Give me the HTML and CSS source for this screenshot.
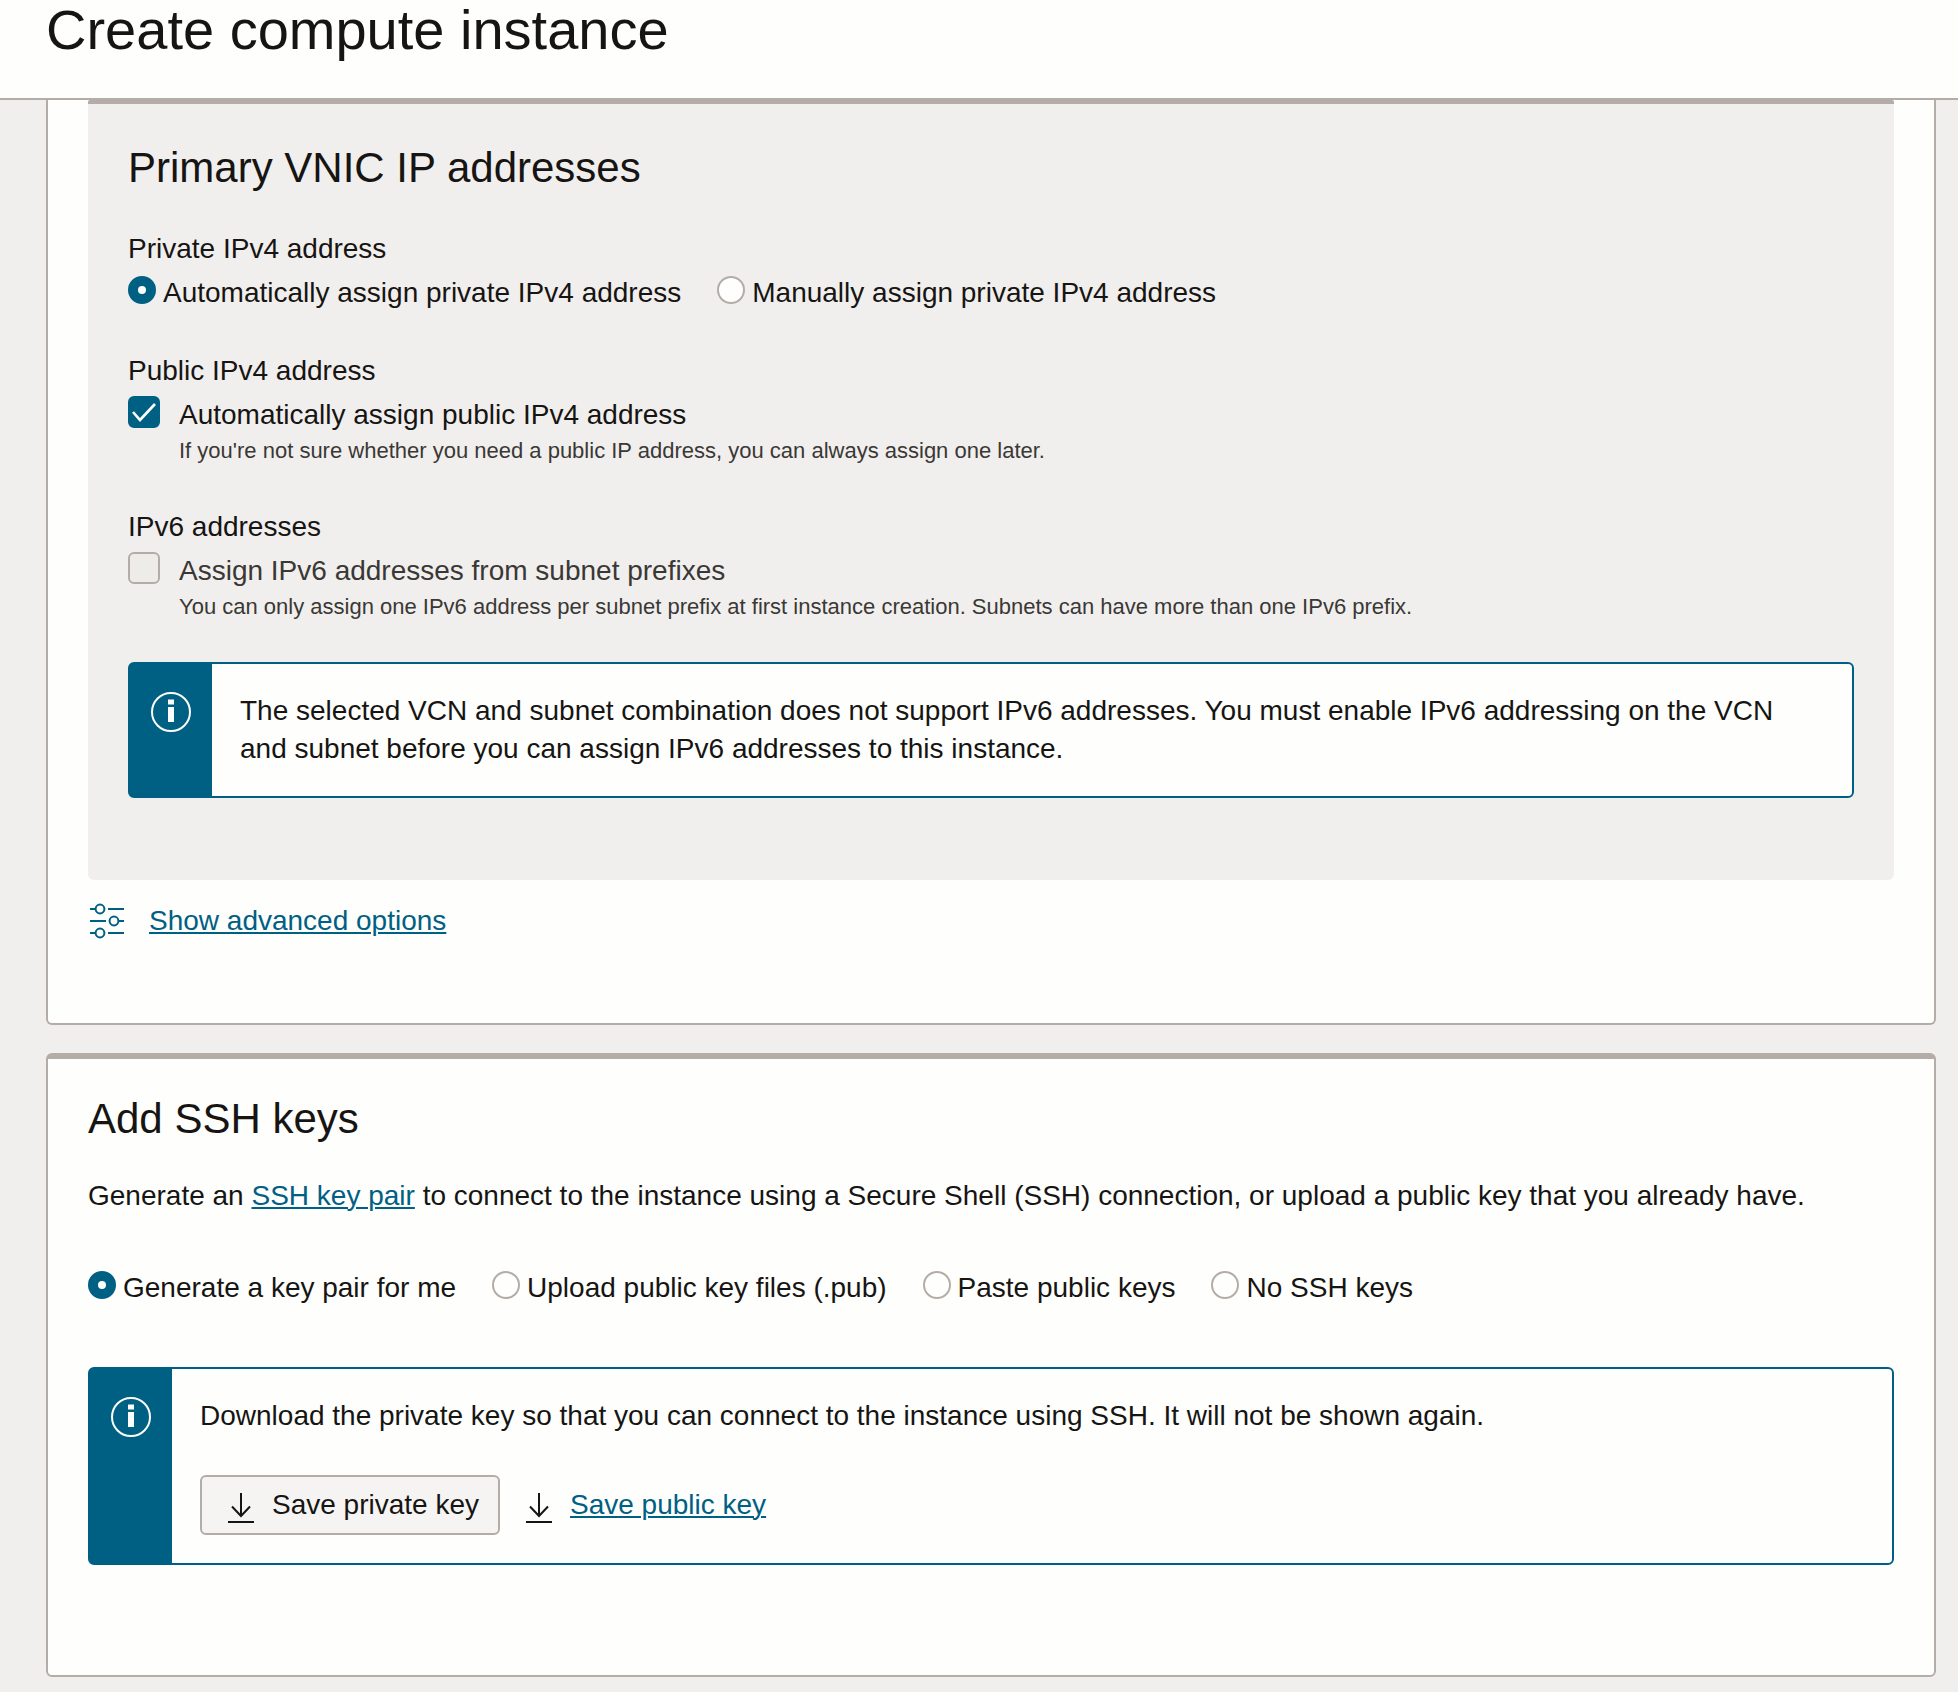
FILE: index.html
```html
<!DOCTYPE html>
<html lang="en">
<head>
<meta charset="utf-8">
<title>Create compute instance</title>
<meta name="viewport" content="width=device-width, initial-scale=1">
<link rel="stylesheet" href="styles.css">
</head>
<body>
<header class="page-header">
  <h1 class="page-title">Create compute instance</h1>
</header>
<main class="content">
  <section class="card card-continued">
    <div class="panel">
      <h2 class="section-title">Primary VNIC IP addresses</h2>

      <fieldset class="field">
        <legend class="field-label">Private IPv4 address</legend>
        <div class="radio-row">
          <label class="option"><input class="radio" type="radio" name="private-ip" checked><span>Automatically assign private IPv4 address</span></label>
          <label class="option"><input class="radio" type="radio" name="private-ip"><span>Manually assign private IPv4 address</span></label>
        </div>
      </fieldset>

      <fieldset class="field">
        <legend class="field-label">Public IPv4 address</legend>
        <div class="check-row">
          <span class="check-box">
            <input class="checkbox" type="checkbox" id="public-ip" aria-describedby="public-ip-hint" checked>
            <svg class="check-mark" viewBox="0 0 32 32" aria-hidden="true"><path d="M5 16l7 8L27 8" fill="none" stroke="currentColor" stroke-width="2.600"/></svg>
          </span>
          <div>
            <label class="check-label" for="public-ip">Automatically assign public IPv4 address</label>
            <p class="hint" id="public-ip-hint">If you're not sure whether you need a public IP address, you can always assign one later.</p>
          </div>
        </div>
      </fieldset>

      <fieldset class="field">
        <legend class="field-label">IPv6 addresses</legend>
        <div class="check-row">
          <span class="check-box">
            <input class="checkbox" type="checkbox" id="ipv6" aria-describedby="ipv6-hint" disabled>
          </span>
          <div>
            <label class="check-label check-label-disabled" for="ipv6">Assign IPv6 addresses from subnet prefixes</label>
            <p class="hint" id="ipv6-hint">You can only assign one IPv6 address per subnet prefix at first instance creation. Subnets can have more than one IPv6 prefix.</p>
          </div>
        </div>
      </fieldset>

      <div class="notice" role="note">
        <div class="notice-icon">
          <svg class="info-icon" viewBox="0 0 40 40" aria-hidden="true"><circle cx="20" cy="20" r="19" fill="none" stroke="currentColor" stroke-width="2"/><path d="M17 7.500h6v5h-6zM17 15h6v15h-6z" fill="currentColor"/></svg>
        </div>
        <div class="notice-body">
          <p>The selected VCN and subnet combination does not support IPv6 addresses. You must enable IPv6 addressing on the VCN and subnet before you can assign IPv6 addresses to this instance.</p>
        </div>
      </div>
    </div>

    <div class="advanced">
      <svg class="sliders-icon" viewBox="0 0 36 36" aria-hidden="true"><g fill="none" stroke="currentColor" stroke-width="2"><path d="M2 6h5M20 6h16M2 18h16M31 18h5M2 30h5M20 30h16"/><circle cx="12" cy="6" r="4.400"/><circle cx="26" cy="18" r="4.400"/><circle cx="12" cy="30" r="4.400"/></g></svg>
      <a class="link" href="#advanced">Show advanced options</a>
    </div>
  </section>

  <section class="card">
    <h2 class="section-title">Add SSH keys</h2>
    <p class="intro">Generate an <a class="link" href="#key-pair">SSH key pair</a> to connect to the instance using a Secure Shell (SSH) connection, or upload a public key that you already have.</p>

    <div class="radio-row" role="radiogroup" aria-label="SSH keys">
      <label class="option"><input class="radio" type="radio" name="ssh" checked><span>Generate a key pair for me</span></label>
      <label class="option"><input class="radio" type="radio" name="ssh"><span>Upload public key files (.pub)</span></label>
      <label class="option"><input class="radio" type="radio" name="ssh"><span>Paste public keys</span></label>
      <label class="option"><input class="radio" type="radio" name="ssh"><span>No SSH keys</span></label>
    </div>

    <div class="notice notice-keys" role="note">
      <div class="notice-icon">
        <svg class="info-icon" viewBox="0 0 40 40" aria-hidden="true"><circle cx="20" cy="20" r="19" fill="none" stroke="currentColor" stroke-width="2"/><path d="M17 7.500h6v5h-6zM17 15h6v15h-6z" fill="currentColor"/></svg>
      </div>
      <div class="notice-body">
        <p>Download the private key so that you can connect to the instance using SSH. It will not be shown again.</p>
        <div class="actions">
          <button class="button" type="button">
            <svg class="download-icon" viewBox="0 0 26 36" aria-hidden="true"><path d="M13 6v23M4 19.500l9 9.500 9-9.500M0 35h26" fill="none" stroke="currentColor" stroke-width="2"/></svg>
            <span>Save private key</span>
          </button>
          <div class="save-public">
            <svg class="download-icon" viewBox="0 0 26 36" aria-hidden="true"><path d="M13 6v23M4 19.500l9 9.500 9-9.500M0 35h26" fill="none" stroke="currentColor" stroke-width="2"/></svg>
            <a class="link" href="#public-key">Save public key</a>
          </div>
        </div>
      </div>
    </div>
  </section>
</main>
</body>
</html>
```
FILE: styles.css
```css
:root {
  --ink: #161513;
  --ink-soft: #3a3835;
  --paper: #fefefc;
  --surface: #f1efed;
  --border: #b4ada7;
  --accent: #006084;
}

* {
  box-sizing: border-box;
}

body {
  margin: 0;
  background: var(--surface);
  color: var(--ink);
  font-family: "Liberation Sans", Arial, sans-serif;
  font-size: 28px;
  line-height: 38px;
}

h1,
h2,
p {
  margin: 0;
  font-weight: 400;
}

.page-header {
  padding: 0 46px 38px;
  background: var(--paper);
  border-bottom: 2px solid var(--border);
}

.page-title {
  font-size: 56px;
  line-height: 60px;
}

.content {
  display: flex;
  flex-direction: column;
  gap: 28px;
  padding: 0 22px 14px 46px;
}

.card {
  padding: 34px 40px 110px;
  background: var(--paper);
  border: 2px solid var(--border);
  border-top-width: 6px;
  border-radius: 6px;
}

.card-continued {
  padding-top: 0;
  padding-bottom: 83px;
  border-top: 0;
  border-top-left-radius: 0;
  border-top-right-radius: 0;
}

.panel {
  padding: 38px 40px 82px;
  background: var(--surface);
  border-top: 4px solid var(--border);
  border-radius: 2px 2px 6px 6px;
}

.section-title {
  font-size: 42px;
  line-height: 52px;
}

.field {
  margin: 36px 0 0;
  padding: 0;
  border: 0;
  min-width: 0;
}

.field + .field {
  margin-top: 40px;
}

.field-label {
  padding: 0;
}

.radio-row {
  display: flex;
  flex-wrap: wrap;
  column-gap: 36px;
  padding-top: 6px;
}

.option {
  display: flex;
  align-items: flex-start;
  gap: 7px;
}

.radio,
.checkbox {
  appearance: none;
  margin: 0;
  flex: none;
  background: var(--paper);
  border: 2px solid var(--border);
}

.radio {
  width: 28px;
  height: 28px;
  margin-top: 2px;
  border-radius: 50%;
}

.radio:checked {
  background: var(--paper);
  border: 10px solid var(--accent);
}

.check-row {
  display: flex;
  gap: 19px;
  padding-top: 6px;
}

.check-box {
  display: grid;
  flex: none;
  width: 32px;
  height: 32px;
}

.checkbox,
.check-mark {
  grid-area: 1 / 1;
  width: 32px;
  height: 32px;
}

.checkbox {
  border-radius: 6px;
}

.checkbox:checked {
  background: var(--accent);
  border-color: var(--accent);
}

.checkbox:disabled {
  background: #eeece8;
}

.check-mark {
  color: var(--paper);
  pointer-events: none;
}

.check-label-disabled,
.hint {
  color: var(--ink-soft);
}

.hint {
  font-size: 22px;
  line-height: 34px;
}

.notice {
  display: flex;
  margin-top: 38px;
  background: var(--paper);
  border: 2px solid var(--accent);
  border-radius: 6px;
}

.notice-icon {
  flex: none;
  width: 82px;
  padding: 28px 0 0 21px;
  background: var(--accent);
  color: var(--paper);
}

.info-icon {
  display: block;
  width: 40px;
  height: 40px;
}

.notice-body {
  padding: 28px;
}

.advanced {
  display: flex;
  align-items: center;
  gap: 25px;
  margin-top: 22px;
}

.sliders-icon {
  width: 36px;
  height: 36px;
  color: var(--accent);
}

.link {
  color: var(--accent);
  text-decoration-thickness: 2px;
  text-underline-offset: 2px;
}

.intro {
  margin: 32px 0 48px;
}

.notice-keys {
  margin-top: 60px;
}

.actions {
  display: flex;
  align-items: center;
  gap: 26px;
  margin-top: 40px;
}

.button,
.save-public {
  display: flex;
  align-items: center;
  gap: 18px;
}

.button {
  height: 60px;
  padding: 0 19px 0 26px;
  color: var(--ink);
  font: inherit;
  background: #f6f4f2;
  border: 2px solid var(--border);
  border-radius: 6px;
}

.download-icon {
  width: 26px;
  height: 36px;
}
```
